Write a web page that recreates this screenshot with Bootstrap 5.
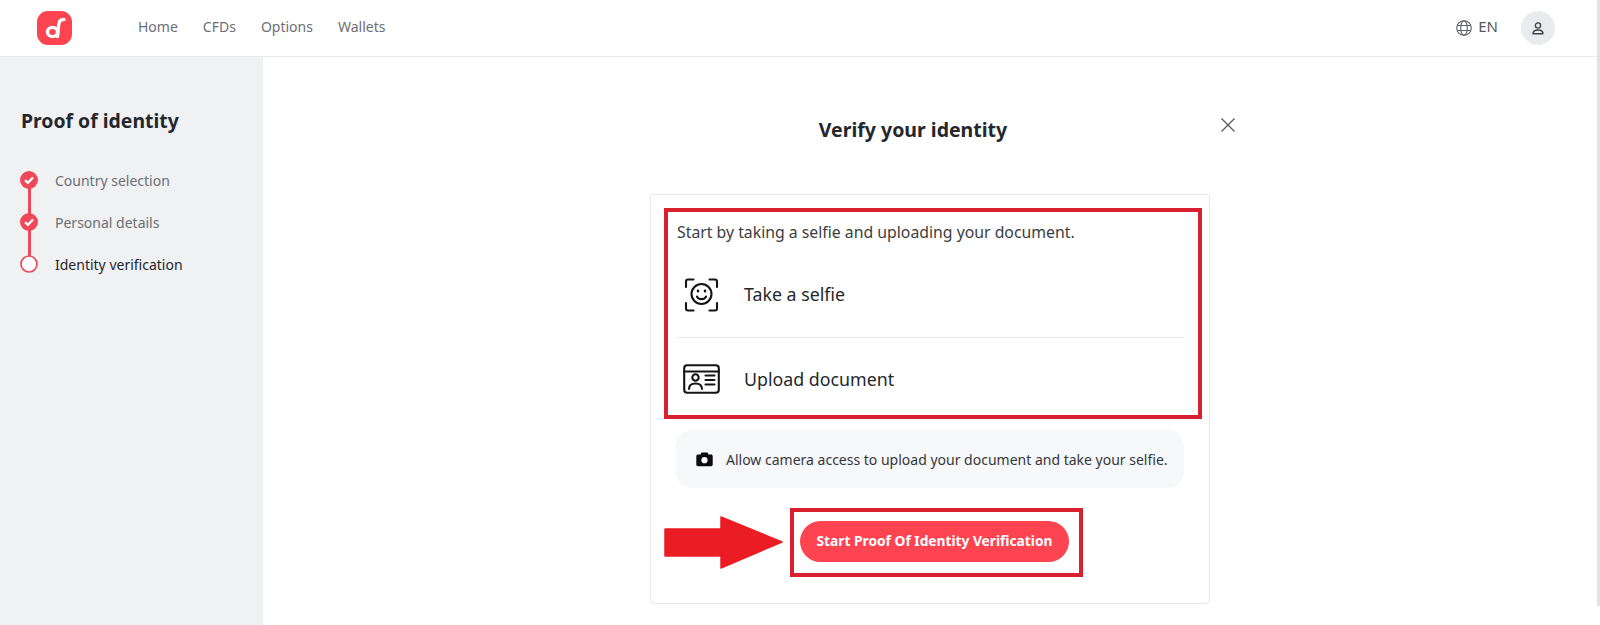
<!DOCTYPE html>
<html lang="en">
<head>
    <meta charset="UTF-8">
    <meta name="viewport" content="width=device-width, initial-scale=1.0">
    <title>Proof of identity</title>
    <link rel="stylesheet" href="https://cdn.jsdelivr.net/npm/bootstrap@5.3.0/dist/css/bootstrap.min.css">
    <style>
        body { font-family: "Noto Sans", "Liberation Sans", sans-serif; color: #24272c; height: 625px; overflow: hidden; position: relative; }
        body::after { content: ""; position: absolute; top: 0; right: 0; width: 3px; height: 606px; background: #e2e2e6; }
        .top-bar { height: 57px; padding: 0 45px 0 37px; border-bottom: 1px solid #e9eaec; }
        .top-links { margin-left: 66px; margin-top: -4px; gap: 25px; }
        .top-links a { color: #6a6f75; font-size: 14px; text-decoration: none; }
        .lang-text { color: #55595e; font-size: 15px; margin: -4px 0 0 6px; }
        .avatar-round { width: 34px; height: 34px; background: #e9ebee; margin-left: 23px; }
        .page-wrap { height: 568px; }
        .side-col { width: 263px; background: #f0f1f3; padding: 50px 0 0 20px; }
        .side-title { font-size: 19.4px; font-weight: 700; line-height: 28px; margin: 0 0 24px 1px; }
        .step-item { height: 42px; gap: 17px; font-size: 14px; color: #6a6f75; position: relative; }
        .step-item.step-now { color: #24272c; }
        .step-item:not(:last-child)::after { content: ""; position: absolute; left: 7.5px; top: 21px; width: 3px; height: 42px; background: #f0485a; }
        .step-item svg { position: relative; z-index: 1; }
        .verify-col { width: 560px; margin-left: 387px; }
        .verify-head { width: 590px; padding-top: 58px; height: 137px; }
        .verify-head h1 { font-size: 19.5px; font-weight: 700; line-height: 30px; padding-right: 40px; margin: 0; }
        .close-x { margin-top: -2px; }
        .verify-card { height: 410px; border: 1px solid #e5e7ea; border-radius: 4px; padding: 13px 7px 0 13px; }
        .note-box { border: 4px solid #d9202e; height: 211px; padding: 9px 14px 0 9px; }
        .note-box p { font-size: 15.8px; line-height: 22px; margin: 0 0 11px; color: #3a3d41; }
        .pick-row { height: 83px; gap: 24px; padding: 0 0 2px 6px; font-size: 17.8px; }
        .pick-row + .pick-row { height: 78px; border-top: 1px solid #e5e7ea; padding: 5px 0 0 6px; }
        .cam-box { margin: 11px 18px 0 12px; height: 58px; background: #f7f8fa; border-radius: 16px; padding-left: 20px; gap: 13px; font-size: 14px; color: #34373b; }
        .action-row { margin: 20px 0 0 0; gap: 7px; }
        .action-frame { border: 4px solid #d9202e; width: 293px; height: 69px; padding: 0 0 3px 6px; }
        .start-btn { background: #fe4351; color: #fff; border: 0; border-radius: 21px; width: 269px; height: 41px; font-size: 13.75px; font-weight: 700; padding: 0; }
    </style>
</head>
<body>
    <nav class="top-bar d-flex align-items-center bg-white">
        <svg width="35" height="34" viewBox="0 0 35 34">
            <rect width="35" height="34" rx="11" fill="#fe4351"/>
            <ellipse cx="15.5" cy="21" rx="5" ry="4.6" fill="none" stroke="#fff" stroke-width="3.4"/>
            <path d="M20.5 25.5C21.5 19 21 12.5 23 9.8Q24 8.5 27 8.5" fill="none" stroke="#fff" stroke-width="3.4" stroke-linecap="round"/>
        </svg>
        <div class="top-links d-flex">
            <a href="#">Home</a>
            <a href="#">CFDs</a>
            <a href="#">Options</a>
            <a href="#">Wallets</a>
        </div>
        <div class="ms-auto d-flex align-items-center">
            <svg width="16" height="16" viewBox="0 0 16 16" fill="none" stroke="#5f6368" stroke-width="1.1">
                <circle cx="8" cy="8" r="7.3"/>
                <ellipse cx="8" cy="8" rx="3.3" ry="7.3"/>
                <path d="M1 5.5H15M1 10.5H15"/>
            </svg>
            <span class="lang-text">EN</span>
            <div class="avatar-round rounded-circle d-flex align-items-center justify-content-center">
                <svg width="12" height="13" viewBox="0 0 12 13" fill="none" stroke="#3f4347" stroke-width="1.4">
                    <circle cx="6" cy="3.5" r="2.6"/>
                    <path d="M1 11.8C1 9 3 8 6 8C9 8 11 9 11 11.8Z" stroke-linejoin="round"/>
                </svg>
            </div>
        </div>
    </nav>

    <div class="page-wrap d-flex">
        <aside class="side-col">
            <div class="side-title">Proof of identity</div>
            <div class="step-item d-flex align-items-center">
                <svg width="18" height="18" viewBox="0 0 18 18"><circle cx="9" cy="9" r="9" fill="#f0485a"/><path d="M5 9.2 7.9 11.8 13 6.5" fill="none" stroke="#fff" stroke-width="2.4"/></svg>
                <span>Country selection</span>
            </div>
            <div class="step-item d-flex align-items-center">
                <svg width="18" height="18" viewBox="0 0 18 18"><circle cx="9" cy="9" r="9" fill="#f0485a"/><path d="M5 9.2 7.9 11.8 13 6.5" fill="none" stroke="#fff" stroke-width="2.4"/></svg>
                <span>Personal details</span>
            </div>
            <div class="step-item step-now d-flex align-items-center">
                <svg width="18" height="18" viewBox="0 0 18 18"><circle cx="9" cy="9" r="8" fill="#fff" stroke="#f0485a" stroke-width="1.7"/></svg>
                <span>Identity verification</span>
            </div>
        </aside>

        <main class="verify-col">
            <div class="verify-head d-flex">
                <h1 class="flex-grow-1 text-center">Verify your identity</h1>
                <svg class="close-x" width="24" height="24" viewBox="0 0 24 24" fill="none" stroke="#55595e" stroke-width="1.3"><path d="M5.5 5.5 18.5 18.5M18.5 5.5 5.5 18.5"/></svg>
            </div>
            <div class="verify-card bg-white">
                <div class="note-box">
                    <p>Start by taking a selfie and uploading your document.</p>
                    <div class="pick-row d-flex align-items-center">
                        <svg width="37" height="36" viewBox="0 0 37 36" fill="none" stroke="#141414" stroke-width="2.1" stroke-linecap="round" stroke-linejoin="round">
                            <path d="M3 10V4.5Q3 2.5 5 2.5H10.5M26.5 2.5H32Q34 2.5 34 4.5V10M3 26V31.5Q3 33.5 5 33.5H10.5M26.5 33.5H32Q34 33.5 34 31.5V26"/>
                            <circle cx="18.5" cy="17" r="10"/>
                            <path d="M14 19.5C15 23 22 23 23 19.5"/>
                            <path d="M15 13.8V14.2M22 13.8V14.2" stroke-width="2.5"/>
                        </svg>
                        <span>Take a selfie</span>
                    </div>
                    <div class="pick-row d-flex align-items-center">
                        <svg width="37" height="30" viewBox="0 0 37 30" fill="none" stroke="#141414" stroke-width="2.1" stroke-linecap="round" stroke-linejoin="round">
                            <rect x="1.2" y="1.2" width="34.6" height="27.6" rx="3"/>
                            <path d="M1.2 7.5H35.8"/>
                            <circle cx="12.5" cy="13.5" r="3.2"/>
                            <path d="M6 25C6 21 8.5 19.5 12.5 19.5C16.5 19.5 19 21 19 25"/>
                            <path d="M22.5 11.5H31.5M22.5 16H31.5M22.5 20.5H31.5"/>
                        </svg>
                        <span>Upload document</span>
                    </div>
                </div>
                <div class="cam-box d-flex align-items-center">
                    <svg width="17" height="16" viewBox="0 0 17 16"><path d="M5.5 1.5H11.5L12.5 3.5H15C16 3.5 16.7 4.2 16.7 5.2V13.5C16.7 14.5 16 15.2 15 15.2H2C1 15.2 .3 14.5 .3 13.5V5.2C.3 4.2 1 3.5 2 3.5H4.5Z" fill="#0b0b0c"/><circle cx="8.5" cy="9.2" r="3.1" fill="#fff"/></svg>
                    <span>Allow camera access to upload your document and take your selfie.</span>
                </div>
                <div class="action-row d-flex align-items-center">
                    <svg width="119" height="53" viewBox="0 0 119 53"><path d="M1 13H57V1L118 26 57 52V40H1Z" fill="#ec1c24" stroke="#ec1c24" stroke-width="1.5" stroke-linejoin="round"/></svg>
                    <div class="action-frame d-flex align-items-center">
                        <button type="button" class="btn start-btn">Start Proof Of Identity Verification</button>
                    </div>
                </div>
            </div>
        </main>
    </div>
</body>
</html>
